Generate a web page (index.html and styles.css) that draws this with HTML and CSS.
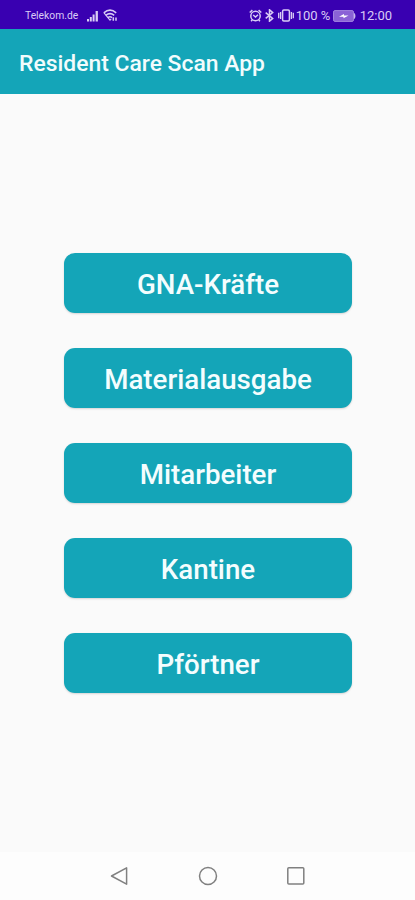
FILE: index.html
```html
<!DOCTYPE html>
<html lang="de">
<head>
  <meta charset="UTF-8">
  <meta name="viewport" content="width=device-width, initial-scale=1.0">
  <title>Resident Care Scan App</title>
  <link rel="stylesheet" href="styles.css">
</head>
<body>
  <!-- Status bar -->
  <div class="status-bar">
    <span class="carrier">Telekom.de</span>
    <svg class="signal" width="12" height="12" viewBox="0 0 12 12" fill="currentColor">
      <path d="M0 9h2v2.5H0zM2.8 7h2v4.5h-2zM5.6 4.5h2v7h-2zM8.6 1h2.3v10.5H8.6z"/>
    </svg>
    <svg class="wifi" width="15" height="13" viewBox="0 0 15 13" fill="none" stroke="currentColor" stroke-width="1.6">
      <path d="M0.8 3.8Q7-1.4 13.2 3.8M2.8 6.3q4.2-3.3 8.4 0M5 8.6q2-1.6 4 0"/>
      <path d="M1 3.8l6 7.4 1.2-1.4" stroke-width="1.1"/>
      <path d="M10.3 8.2v3.6M13 8.6v3.2" stroke-width="1.5"/>
    </svg>
    <div class="status-right">
      <svg class="alarm" width="13" height="13" viewBox="0 0 13 13" fill="none" stroke="currentColor" stroke-width="1.5">
        <circle cx="6.5" cy="7" r="4.7"/>
        <path d="M0.7 3.5l2.7-2.4M12.3 3.5L9.6 1.1M4.2 6l2.3 2 2.5-2.3M3.3 10.8l-1.2 1.5M9.7 10.8l1.2 1.5"/>
      </svg>
      <svg class="bluetooth" width="9" height="13" viewBox="0 0 9 13" fill="none" stroke="currentColor" stroke-width="1.5">
        <path d="M0.7 3.6l7 5.8-3.2 2.8V0.8l3.2 2.8-7 5.8"/>
      </svg>
      <svg class="vibrate" width="16" height="13" viewBox="0 0 16 13" fill="none" stroke="currentColor" stroke-width="1.5">
        <rect x="4.6" y="1" width="6.8" height="11" rx="1.2"/>
        <path d="M2.6 3v7M0.7 3.8v5.4M13.4 3v7M15.3 3.8v5.4" stroke-width="1.3"/>
      </svg>
      <span class="percent">100 %</span>
      <svg class="battery" width="23" height="12" viewBox="0 0 23 12">
        <rect x="0.5" y="0.6" width="20" height="10.8" rx="1.5" fill="#8a62d6" stroke="#a184df"/>
        <path d="M21.5 3.5q1.2 2.5 0 5z" fill="#d9ccf5" stroke="#d9ccf5" stroke-width="0.7"/>
        <path d="M6 6.7l5-2.8v1.5l4.5 0.2-5 2.6V6.7z" fill="#fff"/>
      </svg>
      <span class="clock">12:00</span>
    </div>
  </div>

  <header class="app-bar">
    <h1>Resident Care Scan App</h1>
  </header>

  <!-- Main menu -->
  <main class="menu">
    <button class="menu-button">GNA-Kräfte</button>
    <button class="menu-button">Materialausgabe</button>
    <button class="menu-button">Mitarbeiter</button>
    <button class="menu-button">Kantine</button>
    <button class="menu-button">Pförtner</button>
  </main>

  <!-- Navigation bar -->
  <nav class="nav-bar">
    <svg width="20" height="20" viewBox="0 0 20 20"><path d="M16.6 1.8v16.4L1.5 10z"/></svg>
    <svg width="20" height="20" viewBox="0 0 20 20"><circle cx="10" cy="10" r="8.5"/></svg>
    <svg width="20" height="20" viewBox="0 0 20 20"><rect x="1.8" y="1.8" width="16" height="16.2" rx="1"/></svg>
  </nav>
</body>
</html>
```
FILE: styles.css
```css
* {
  box-sizing: border-box;
}
body {
  margin: 0;
  height: 100vh;
  display: flex;
  flex-direction: column;
  background: #fafafa;
  font-family: Roboto, sans-serif;
}
.status-bar {
  height: 29px;
  padding: 2px 23px 0 25px;
  display: flex;
  align-items: center;
  background: #3900b1;
  color: #d9ccf5;
}
.carrier {
  width: 62px;
  font-size: 10.3px;
  white-space: nowrap;
}
.wifi {
  margin-left: 4px;
}
.status-right {
  margin-left: auto;
  display: flex;
  align-items: center;
}
.bluetooth {
  margin-left: 3px;
}
.vibrate {
  margin-left: 4px;
}
.percent {
  width: 35px;
  margin-left: 2px;
  font-size: 13px;
  white-space: nowrap;
}
.battery {
  margin-left: 2px;
}
.clock {
  margin-left: 4px;
  font-size: 13px;
}
.app-bar {
  height: 65px;
  padding: 3px 19px 0;
  display: flex;
  align-items: center;
  background: #14a5b8;
}
.app-bar h1 {
  margin: 0;
  color: #f1fcfd;
  font-size: 22.9px;
  font-weight: 500;
}
.menu {
  flex: 1;
  padding: 159px 63px 0 64px;
  display: flex;
  flex-direction: column;
  gap: 35px;
}
.menu-button {
  height: 60px;
  padding: 3px 0 0;
  border: none;
  border-radius: 11px;
  background: #14a5b8;
  box-shadow: 0 1px 2px rgba(0, 0, 0, 0.15);
  color: #f4fdfe;
  font-family: inherit;
  font-size: 27.7px;
  font-weight: 500;
}
.nav-bar {
  height: 48px;
  display: flex;
  align-items: center;
  justify-content: center;
  gap: 68px;
  background: #fdfdfd;
}
.nav-bar svg {
  fill: none;
  stroke: #808080;
  stroke-width: 1.5;
  stroke-linejoin: round;
}
```
